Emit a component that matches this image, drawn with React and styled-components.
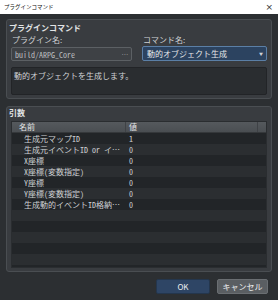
import styled, { createGlobalStyle } from "styled-components";

const GlobalStyle = createGlobalStyle`
  body {
    margin: 0;
    background: #2c2f32;
    font-family: "Noto Sans Mono CJK JP", "Noto Sans CJK JP", "DejaVu Sans Mono", monospace;
  }
`;

const args = [
  { name: "生成元マップID", value: "1" },
  { name: "生成元イベントID or イベント名", value: "0" },
  { name: "X座標", value: "0" },
  { name: "X座標(変数指定)", value: "0" },
  { name: "Y座標", value: "0" },
  { name: "Y座標(変数指定)", value: "0" },
  { name: "生成動的イベントID格納変数", value: "0" },
  { name: "", value: "" },
  { name: "", value: "" },
  { name: "", value: "" },
  { name: "", value: "" },
  { name: "", value: "" },
  { name: "", value: "" },
];

export default function App() {
  return (
    <Window>
      <GlobalStyle />
      <TitleBar>
        <span>プラグインコマンド</span>
        <CloseMark>×</CloseMark>
      </TitleBar>
      <Body>
        <Group>
          <GroupTitle>プラグインコマンド</GroupTitle>
          <Fields>
            <FieldLabel>プラグイン名:</FieldLabel>
            <FieldLabel>コマンド名:</FieldLabel>
            <TextBox>
              <span>build/ARPG_Core</span>
              <Dots>···</Dots>
            </TextBox>
            <ComboBox>
              <span>動的オブジェクト生成</span>
              <Arrow>▼</Arrow>
            </ComboBox>
          </Fields>
          <Description>動的オブジェクトを生成します。</Description>
        </Group>
        <Group grow>
          <GroupTitle>引数</GroupTitle>
          <Table>
            <HeaderRow>
              <HeaderCell>名前</HeaderCell>
              <HeaderCell value>値</HeaderCell>
              <HeaderCell filler />
            </HeaderRow>
            {args.map((row, i) => (
              <Row key={i} odd={i % 2 === 1}>
                <NameCell>{row.name}</NameCell>
                <ValueCell>{row.value}</ValueCell>
              </Row>
            ))}
          </Table>
        </Group>
        <Buttons>
          <Button primary>OK</Button>
          <Button>キャンセル</Button>
        </Buttons>
      </Body>
    </Window>
  );
}

const Window = styled.div`
  width: 278px;
  height: 300px;
  display: flex;
  flex-direction: column;
  overflow: hidden;
  background: #2c2f32;
`;

const TitleBar = styled.div`
  height: 14px;
  flex: none;
  box-sizing: border-box;
  display: flex;
  align-items: center;
  justify-content: space-between;
  padding: 0 5px 0 4px;
  background: #ffffff;
  color: #111;
  font-family: "Noto Sans CJK JP", sans-serif;
  font-size: 5.5px;
`;

const CloseMark = styled.span`
  font-size: 9px;
  color: #333;
  font-family: "DejaVu Sans", sans-serif;
`;

const Body = styled.div`
  flex: 1;
  display: flex;
  flex-direction: column;
  padding: 5px 6px 6px;
  gap: 7px;
  min-height: 0;
`;

const Group = styled.div`
  border: 1px solid #4a4e52;
  border-radius: 3px;
  background: #393c40;
  padding: ${({ grow }) => (grow ? "1px 4px 3px" : "3px 4px 3px")};
  display: flex;
  flex-direction: column;
  flex: ${({ grow }) => (grow ? "1" : "none")};
  min-height: 0;
`;

const GroupTitle = styled.div`
  font-family: "Noto Sans CJK JP", sans-serif;
  font-weight: 700;
  font-size: 8px;
  line-height: 10px;
  color: #e2e4e6;
  margin-left: -2px;
`;

const Fields = styled.div`
  display: grid;
  grid-template-columns: 121px 1fr;
  column-gap: 10px;
  row-gap: 2px;
  margin-top: 2px;
`;

const FieldLabel = styled.div`
  font-family: "Noto Sans CJK JP", sans-serif;
  font-size: 8px;
  line-height: 10px;
  color: #cfd2d5;
  padding-left: 1px;
`;

const TextBox = styled.div`
  height: 14px;
  box-sizing: border-box;
  border: 1px solid #5c6064;
  border-radius: 2px;
  background: #3e4145;
  color: #b9bcbf;
  font-size: 8px;
  display: flex;
  align-items: center;
  justify-content: space-between;
  padding: 0 3px 0 3px;
`;

const Dots = styled.span`
  font-size: 6px;
  color: #c8c8c8;
  letter-spacing: -1px;
`;

const ComboBox = styled.div`
  height: 15px;
  margin-top: -1px;
  box-sizing: border-box;
  border: 1px solid #5b7fa6;
  border-radius: 2px;
  background: #2c4360;
  color: #e6e8ea;
  font-family: "Noto Sans CJK JP", sans-serif;
  font-size: 8px;
  display: flex;
  align-items: center;
  justify-content: space-between;
  padding: 0 3px 0 4px;
`;

const Arrow = styled.span`
  font-size: 4px;
  color: #d0d4d8;
`;

const Description = styled.div`
  margin-top: 6px;
  height: 28px;
  box-sizing: border-box;
  border: 1px solid #222427;
  border-radius: 2px;
  background: #2a2d30;
  color: #cfd2d5;
  font-family: "Noto Sans CJK JP", sans-serif;
  font-size: 8px;
  line-height: 10px;
  padding: 3px 2px;
`;

const Table = styled.div`
  margin-top: 3px;
  flex: 1;
  min-height: 0;
  overflow: hidden;
  border: 1px solid #2a2d30;
  background: #232629;
`;

const HeaderRow = styled.div`
  display: grid;
  grid-template-columns: 113px 132px 1fr;
  height: 10px;
  background: linear-gradient(#55595d, #4a4e52);
  border-bottom: 1px solid #35383b;
`;

const HeaderCell = styled.div`
  font-family: "Noto Sans CJK JP", sans-serif;
  font-size: 8px;
  line-height: 10px;
  color: #e4e6e8;
  padding-left: ${({ value }) => (value ? "3px" : "7px")};
  border-left: ${({ value, filler }) =>
    value || filler ? "1px solid #3f4246" : "none"};
`;

const Row = styled.div`
  display: grid;
  grid-template-columns: 113px 1fr;
  height: 11px;
  background: ${({ odd }) => (odd ? "#2b2e31" : "#222528")};
`;

const NameCell = styled.div`
  font-size: 8px;
  line-height: 11px;
  color: #cdd0d3;
  padding-left: 12px;
  padding-right: 2px;
  white-space: nowrap;
  overflow: hidden;
  text-overflow: ellipsis;
`;

const ValueCell = styled.div`
  font-size: 8px;
  line-height: 11px;
  color: #cdd0d3;
  padding-left: 4px;
`;

const Buttons = styled.div`
  display: flex;
  justify-content: flex-end;
  gap: 7px;
  padding-right: 4px;
  flex: none;
`;

const Button = styled.button`
  height: 15px;
  width: ${({ primary }) => (primary ? "54px" : "51px")};
  box-sizing: border-box;
  border: 1px solid ${({ primary }) => (primary ? "#24364d" : "#6a6e72")};
  border-radius: 2px;
  background: ${({ primary }) => (primary ? "#2e4565" : "#5a5e62")};
  color: #eceef0;
  font-family: "Noto Sans CJK JP", sans-serif;
  font-size: 8px;
  padding: 0;
`;
